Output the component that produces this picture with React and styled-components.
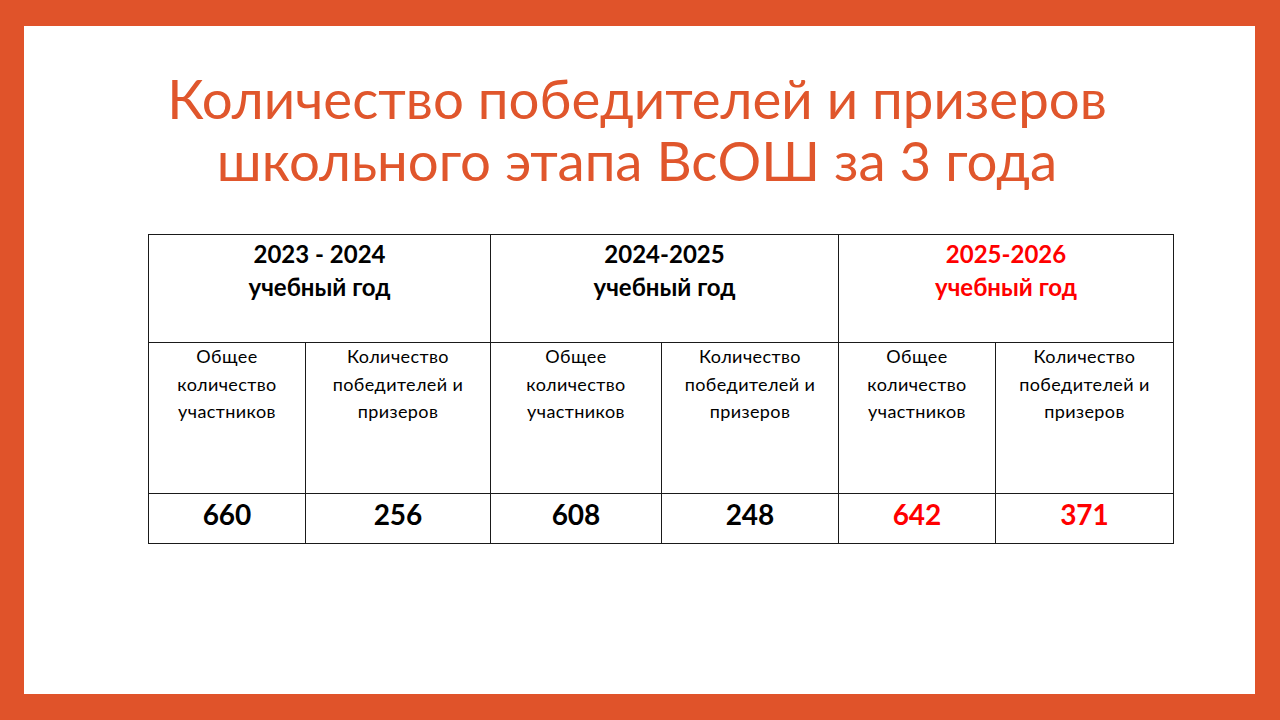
import React from 'react'
import styled, { createGlobalStyle } from 'styled-components'

const GlobalStyle = createGlobalStyle`
    html, body {
        margin: 0;
        padding: 0;
        background: #E0532A;
    }
    body {
        font-family: Lato, "Liberation Sans", sans-serif;
    }
`

const Frame = styled.div`
    width: 1280px;
    height: 720px;
    box-sizing: border-box;
    padding: 26px 25px 26px 24px;
    background: #E0532A;
`

const Slide = styled.div`
    width: 100%;
    height: 100%;
    background: #fff;
    display: flex;
    flex-direction: column;
`

const Title = styled.h1`
    margin: 41px 0 0 0;
    padding-right: 5px;
    text-align: center;
    font-family: Lato, "Liberation Sans", sans-serif;
    font-weight: 400;
    font-size: 54.6px;
    line-height: 62px;
    color: #E0562C;
`

const Table = styled.table`
    margin: 43px 0 0 124px;
    border-collapse: collapse;
    table-layout: fixed;
    width: 1025px;
    color: #000;
`

const Cell = styled.td`
    border: 1px solid #1a1a1a;
    padding: 0;
    text-align: center;
    vertical-align: top;
`

const YearCell = styled(Cell)`
    height: 105px;
    padding-top: 2px;
    font-weight: 700;
    font-size: 24px;
    line-height: 33px;
    color: ${({ $accent }) => ($accent ? '#f00' : '#000')};
`

const LabelCell = styled(Cell)`
    height: 150px;
    padding-top: 0;
    font-size: 18px;
    letter-spacing: 0.4px;
    line-height: 27.5px;
`

const NumberCell = styled(Cell)`
    height: 44px;
    padding-top: 5px;
    font-weight: 700;
    font-size: 28px;
    line-height: 30px;
    color: ${({ $accent }) => ($accent ? '#f00' : '#000')};
`

const years = [
    { label: '2023 - 2024', total: '660', winners: '256' },
    { label: '2024-2025', total: '608', winners: '248' },
    { label: '2025-2026', total: '642', winners: '371', accent: true },
]

const widths = [157, 185, 171, 177, 157, 178]

const App = () => {
    return (
        <Frame>
            <GlobalStyle />
            <Slide>
                <Title>
                    Количество победителей и призеров<br />
                    школьного этапа ВсОШ за 3 года
                </Title>
                <Table>
                    <colgroup>
                        {widths.map((w, i) => <col key={i} style={{ width: w }} />)}
                    </colgroup>
                    <tbody>
                        <tr>
                            {years.map(y => (
                                <YearCell key={y.label} colSpan={2} $accent={y.accent}>
                                    {y.label}<br />учебный год
                                </YearCell>
                            ))}
                        </tr>
                        <tr>
                            {years.map(y => (
                                <React.Fragment key={y.label}>
                                    <LabelCell>Общее<br />количество<br />участников</LabelCell>
                                    <LabelCell>Количество<br />победителей и<br />призеров</LabelCell>
                                </React.Fragment>
                            ))}
                        </tr>
                        <tr>
                            {years.map(y => (
                                <React.Fragment key={y.label}>
                                    <NumberCell $accent={y.accent}>{y.total}</NumberCell>
                                    <NumberCell $accent={y.accent}>{y.winners}</NumberCell>
                                </React.Fragment>
                            ))}
                        </tr>
                    </tbody>
                </Table>
            </Slide>
        </Frame>
    )
}

export default App
